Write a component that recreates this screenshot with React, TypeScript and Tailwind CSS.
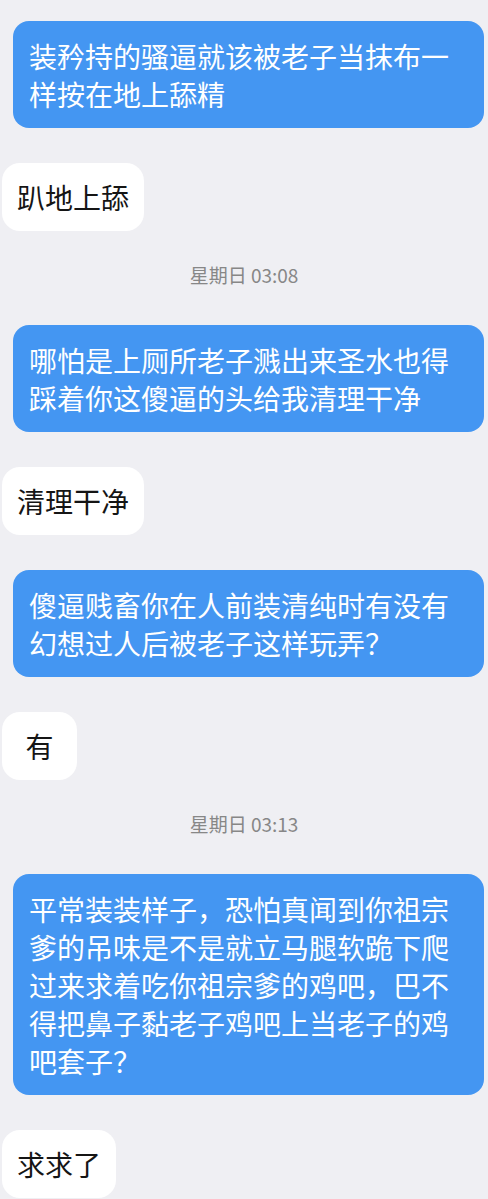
const FONT = "font-['Noto_Sans_CJK_SC',sans-serif]";

type Msg =
  | { kind: "me"; text: string }
  | { kind: "them"; text: string; narrow?: boolean }
  | { kind: "time"; text: string };

const messages: Msg[] = [
  { kind: "me", text: "装矜持的骚逼就该被老子当抹布一样按在地上舔精" },
  { kind: "them", text: "趴地上舔" },
  { kind: "time", text: "星期日 03:08" },
  { kind: "me", text: "哪怕是上厕所老子溅出来圣水也得踩着你这傻逼的头给我清理干净" },
  { kind: "them", text: "清理干净" },
  { kind: "me", text: "傻逼贱畜你在人前装清纯时有没有幻想过人后被老子这样玩弄？" },
  { kind: "them", text: "有", narrow: true },
  { kind: "time", text: "星期日 03:13" },
  {
    kind: "me",
    text: "平常装装样子，恐怕真闻到你祖宗爹的吊味是不是就立马腿软跪下爬过来求着吃你祖宗爹的鸡吧，巴不得把鼻子黏老子鸡吧上当老子的鸡吧套子？",
  },
  { kind: "them", text: "求求了" },
];

export default function App() {
  return (
    <main className={`min-h-[1199px] w-[488px] bg-[#efeff3] pt-[21px] pb-10 flex flex-col ${FONT}`}>
      {messages.map((m, i) => {
        const prev = i > 0 ? messages[i - 1] : null;
        if (m.kind === "time") {
          return (
            <div
              key={i}
              className="mt-[32px] h-[24px] text-center text-[19px] leading-[24px] text-[#878787]"
            >
              {m.text}
            </div>
          );
        }
        const top = i === 0 ? "mt-0" : prev?.kind === "time" ? "mt-[38px]" : "mt-[35px]";
        if (m.kind === "me") {
          return (
            <div key={i} className={`${top} flex justify-end pl-[13px] pr-[4px]`}>
              <div className="max-w-[471px] rounded-[16px] bg-[#4496f2] px-[16px] py-[15.5px] text-[28px] leading-[38px] text-white">
                {m.text}
              </div>
            </div>
          );
        }
        return (
          <div key={i} className={`${top} flex justify-start pl-[2px]`}>
            <div
              className={`rounded-[18px] bg-white py-[15px] text-[28px] leading-[38px] text-[#151515] ${
                m.narrow ? "min-w-[75px] text-center" : "px-[15px]"
              }`}
            >
              {m.text}
            </div>
          </div>
        );
      })}
    </main>
  );
}
